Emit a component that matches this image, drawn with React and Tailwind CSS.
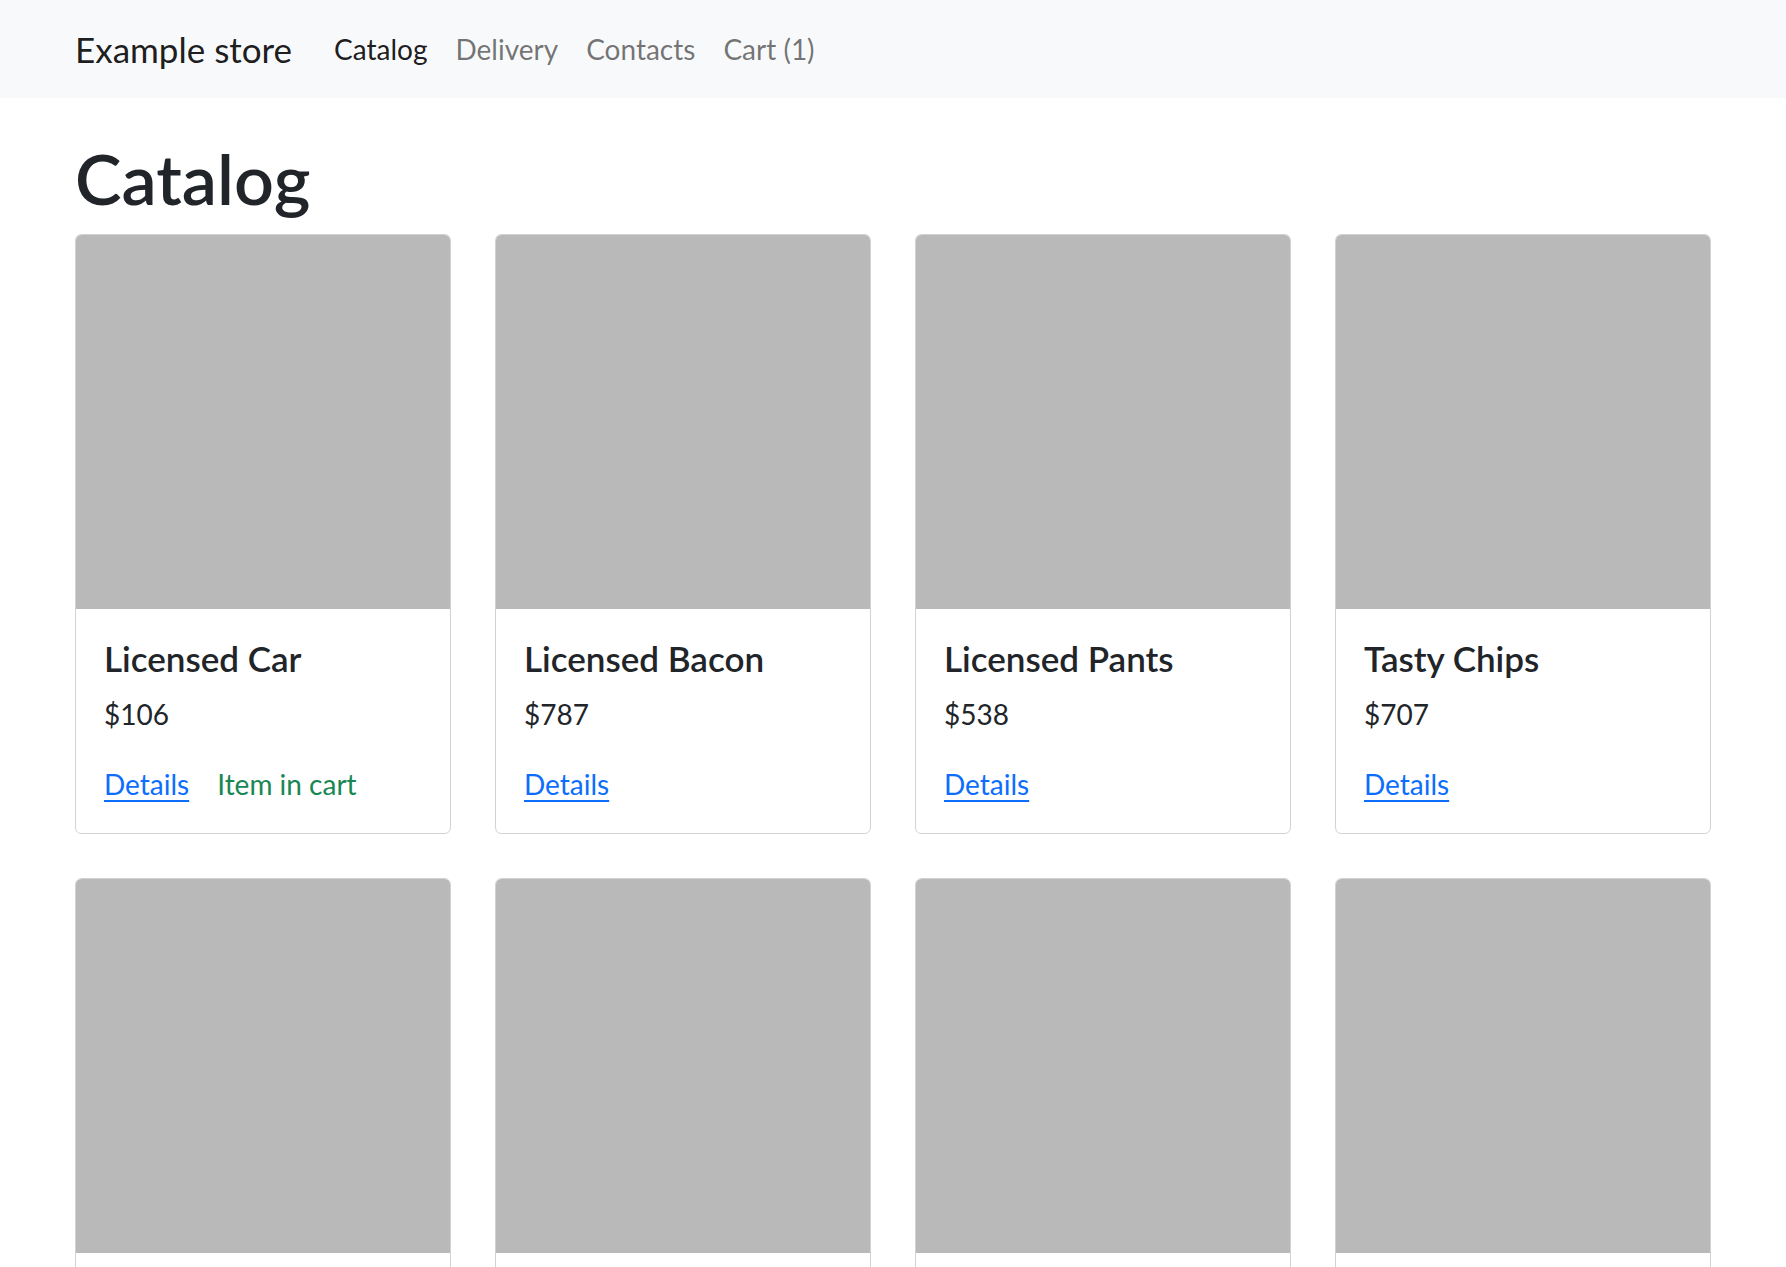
import React from "react";

const products = [
  { id: 1, title: "Licensed Car", price: 106, inCart: true },
  { id: 2, title: "Licensed Bacon", price: 787 },
  { id: 3, title: "Licensed Pants", price: 538 },
  { id: 4, title: "Tasty Chips", price: 707 },
  { id: 5, title: "Product 5", price: 0 },
  { id: 6, title: "Product 6", price: 0 },
  { id: 7, title: "Product 7", price: 0 },
  { id: 8, title: "Product 8", price: 0 },
];

const navLinks = [
  { label: "Catalog", active: true },
  { label: "Delivery" },
  { label: "Contacts" },
  { label: "Cart (1)" },
];

const ProductCard = ({ product }) => (
  <div className="flex flex-col rounded-[6.5px] border-[1.75px] border-black/[0.175] bg-white overflow-hidden">
    {/* Image placeholder */}
    <div className="aspect-square w-full bg-[#b9b9b9]" />
    <div className="p-[28px]">
      <h5 className="mb-[14px] text-[35px] leading-[42px] font-semibold text-[#212529]">
        {product.title}
      </h5>
      <p className="mb-[28px] text-[28px] leading-[42px] text-[#212529]">
        ${product.price}
      </p>
      <div className="flex text-[28px] leading-[42px]">
        <a href="#" className="text-[#0d6efd] underline underline-offset-[5px]">
          Details
        </a>
        {product.inCart && (
          <span className="ml-[28px] text-[#198754]">Item in cart</span>
        )}
      </div>
    </div>
  </div>
);

const App = () => {
  return (
    <div className="min-h-screen bg-white font-['Lato',sans-serif] text-[#212529]">
      {/* Navbar */}
      <nav className="flex h-[98px] items-center bg-[#f8f9fa] px-[75px]">
        <a href="#" className="mr-[28px] text-[35px] leading-[52px] text-black/90">
          Example store
        </a>
        <ul className="flex">
          {navLinks.map((link) => (
            <li key={link.label}>
              <a
                href="#"
                className={
                  "px-[14px] text-[28px] leading-[42px] " +
                  (link.active ? "text-black/90" : "text-black/55")
                }
              >
                {link.label}
              </a>
            </li>
          ))}
        </ul>
      </nav>

      {/* Catalog */}
      <div className="px-[75px]">
        <h1 className="mt-[38px] mb-[14px] text-[70px] leading-[84px] font-semibold">
          Catalog
        </h1>
        <div className="grid grid-cols-4 gap-[44px] pb-[44px]">
          {products.map((p) =>
            p.id <= 4 ? (
              <ProductCard key={p.id} product={p} />
            ) : (
              <div
                key={p.id}
                className="h-[600px] rounded-[6.5px] border-[1.75px] border-black/[0.175] overflow-hidden"
              >
                <div className="aspect-square w-full bg-[#b9b9b9]" />
              </div>
            )
          )}
        </div>
      </div>
    </div>
  );
};

export default App;
